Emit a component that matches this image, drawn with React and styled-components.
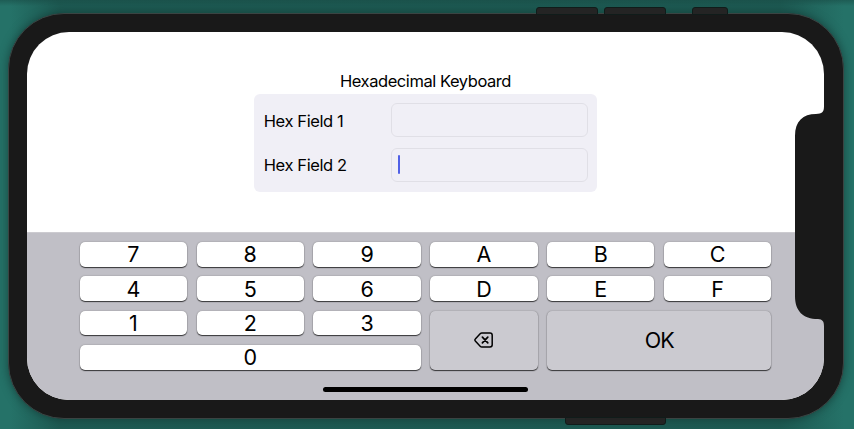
import React from "react";
import styled, { createGlobalStyle } from "styled-components";

const GlobalStyle = createGlobalStyle`
  * { box-sizing: border-box; }
  html, body { margin: 0; padding: 0; overflow: hidden; }
  body { font-family: Inter, "Liberation Sans", sans-serif; color: #000; }
`;

const Desktop = styled.main`
  position: relative;
  width: 854px;
  height: 429px;
  overflow: hidden;
  padding: 13px 10px 10px 8px;
  background:
    linear-gradient(90deg, rgba(24, 74, 68, 0) 10px, rgba(24, 74, 68, 0.6) 60px, rgba(24, 74, 68, 0.6) 780px, rgba(24, 74, 68, 0) 844px),
    linear-gradient(rgba(20, 60, 56, 0.4), rgba(20, 60, 56, 0) 6px),
    #257268;
`;

const Phone = styled.div`
  position: relative;
  width: 836px;
  height: 405.5px;
  padding: 18px;
  border: 1px solid #3a4443;
  border-radius: 56px;
  background: #191919;
  box-shadow: 0 0 10px rgba(15, 50, 46, 0.7);
`;

const SideButton = styled.span`
  position: absolute;
  left: ${(p) => p.$x}px;
  top: ${(p) => (p.$bottom ? 417 : 7)}px;
  width: ${(p) => p.$w}px;
  height: 8px;
  border: 1px solid #101c1a;
  border-radius: ${(p) => (p.$bottom ? "0 0 3px 3px" : "3px 3px 0 0")};
  background: #242424;
`;

const Screen = styled.div`
  position: relative;
  display: flex;
  flex-direction: column;
  width: 797px;
  height: 368px;
  overflow: hidden;
  border-radius: 42px;
  background: #fff;
`;

const Notch = styled.svg`
  position: absolute;
  right: 0;
  top: 74px;
  width: 30px;
  height: 221px;
`;

const Content = styled.section`
  display: flex;
  flex-direction: column;
  align-items: center;
  height: 200px;
  padding: 38px 0 0;
`;

const Title = styled.h1`
  margin: 0 0 1px;
  font-size: 16.5px;
  line-height: 22.5px;
  font-weight: 400;
  letter-spacing: -0.44px;
`;

const Form = styled.div`
  display: flex;
  flex-direction: column;
  gap: 10.5px;
  width: 343.5px;
  height: 98px;
  padding: 9.5px 9.5px 9.5px 10px;
  border-radius: 6px;
  background: #f0eff6;
`;

const Field = styled.label`
  display: grid;
  grid-template-columns: 127px 1fr;
  align-items: center;
  height: 34px;
  font-size: 16.5px;
  letter-spacing: -0.4px;
`;

const Label = styled.span`
  padding-top: 1px;
`;

const Input = styled.span`
  display: flex;
  align-items: center;
  height: 34px;
  padding-left: 6px;
  border: 1px solid #e0dfe6;
  border-radius: 6px;
`;

const Caret = styled.i`
  width: 2px;
  height: 19px;
  border-radius: 1px;
  background: #5060e6;
`;

const Keyboard = styled.section`
  display: flex;
  flex-direction: column;
  align-items: center;
  height: 168px;
  padding: 9px 0 0;
  border-top: 1px solid #cccbd0;
  background: #c0bfc6;
`;

const Keys = styled.div`
  display: grid;
  grid-template-columns: repeat(6, 1fr);
  grid-template-rows: repeat(4, 24.6px);
  gap: 9.8px 9.5px;
  width: 691.5px;
`;

const Key = styled.button`
  display: flex;
  align-items: center;
  justify-content: center;
  grid-column: span ${(p) => p.$cols || 1};
  grid-row: span ${(p) => p.$rows || 1};
  min-width: 0;
  margin: 0;
  padding: 0;
  border: 0;
  border-radius: 5px;
  background: ${(p) => (p.$action ? "#cbcad0" : "#fff")};
  box-shadow: 0 1px 1px rgba(0, 0, 0, 0.7), 0 0 1.5px rgba(0, 0, 0, 0.35);
  color: #000;
  font-family: inherit;
  font-size: 21.5px;
  line-height: 24px;
  letter-spacing: ${(p) => (p.$action ? -1.1 : 0)}px;
`;

const HomeIndicator = styled.div`
  width: 205px;
  height: 5px;
  margin-top: 17.5px;
  border-radius: 3px;
  background: #000;
`;

const KEYS = [
  { label: "7" }, { label: "8" }, { label: "9" }, { label: "A" }, { label: "B" }, { label: "C" },
  { label: "4" }, { label: "5" }, { label: "6" }, { label: "D" }, { label: "E" }, { label: "F" },
  { label: "1" }, { label: "2" }, { label: "3" },
  { label: "delete", rows: 2, action: true },
  { label: "OK", cols: 2, rows: 2, action: true },
  { label: "0", cols: 3 },
];

function DeleteIcon() {
  return (
    <svg width="20" height="16" viewBox="0 0 20 16" fill="none" stroke="#000" strokeWidth="1.5" strokeLinecap="round" strokeLinejoin="round">
      <path d="M7.8 1h8.2a2.200 2.200 0 0 1 2.200 2.200v9.600a2.200 2.200 0 0 1-2.200 2.200H7.800a2 2 0 0 1-1.400-.6L1.300 9a1.400 1.400 0 0 1 0-2l5.100-5.400a2 2 0 0 1 1.400-.6z" />
      <path d="m8.400 5.200 5.400 5.600M13.800 5.200l-5.400 5.600" strokeWidth="1.700" />
    </svg>
  );
}

export default function App() {
  return (
    <>
      <GlobalStyle />
      <Desktop>
        <Phone>
          <Screen>
            <Content>
              <Title>Hexadecimal Keyboard</Title>
              <Form>
                <Field><Label>Hex Field 1</Label><Input /></Field>
                <Field><Label>Hex Field 2</Label><Input><Caret /></Input></Field>
              </Form>
            </Content>
            <Keyboard>
              <Keys>
                {KEYS.map((k) => (
                  <Key key={k.label} $cols={k.cols} $rows={k.rows} $action={k.action} aria-label={k.label}>
                    {k.label === "delete" ? <DeleteIcon /> : k.label}
                  </Key>
                ))}
              </Keys>
              <HomeIndicator />
            </Keyboard>
            <Notch viewBox="0 0 30 221">
              <path
                d="M30 0V220.500C30 215 28.500 213.500 24 213C9 213 1 205 1 190V30C1 15 9 8 22 8C28 7.500 30 6.500 30 0Z"
                fill="#191919"
              />
            </Notch>
          </Screen>
        </Phone>
        <SideButton $x={536} $w={61.5} />
        <SideButton $x={604} $w={61.5} />
        <SideButton $x={692} $w={36} />
        <SideButton $x={565} $w={100.5} $bottom />
      </Desktop>
    </>
  );
}
